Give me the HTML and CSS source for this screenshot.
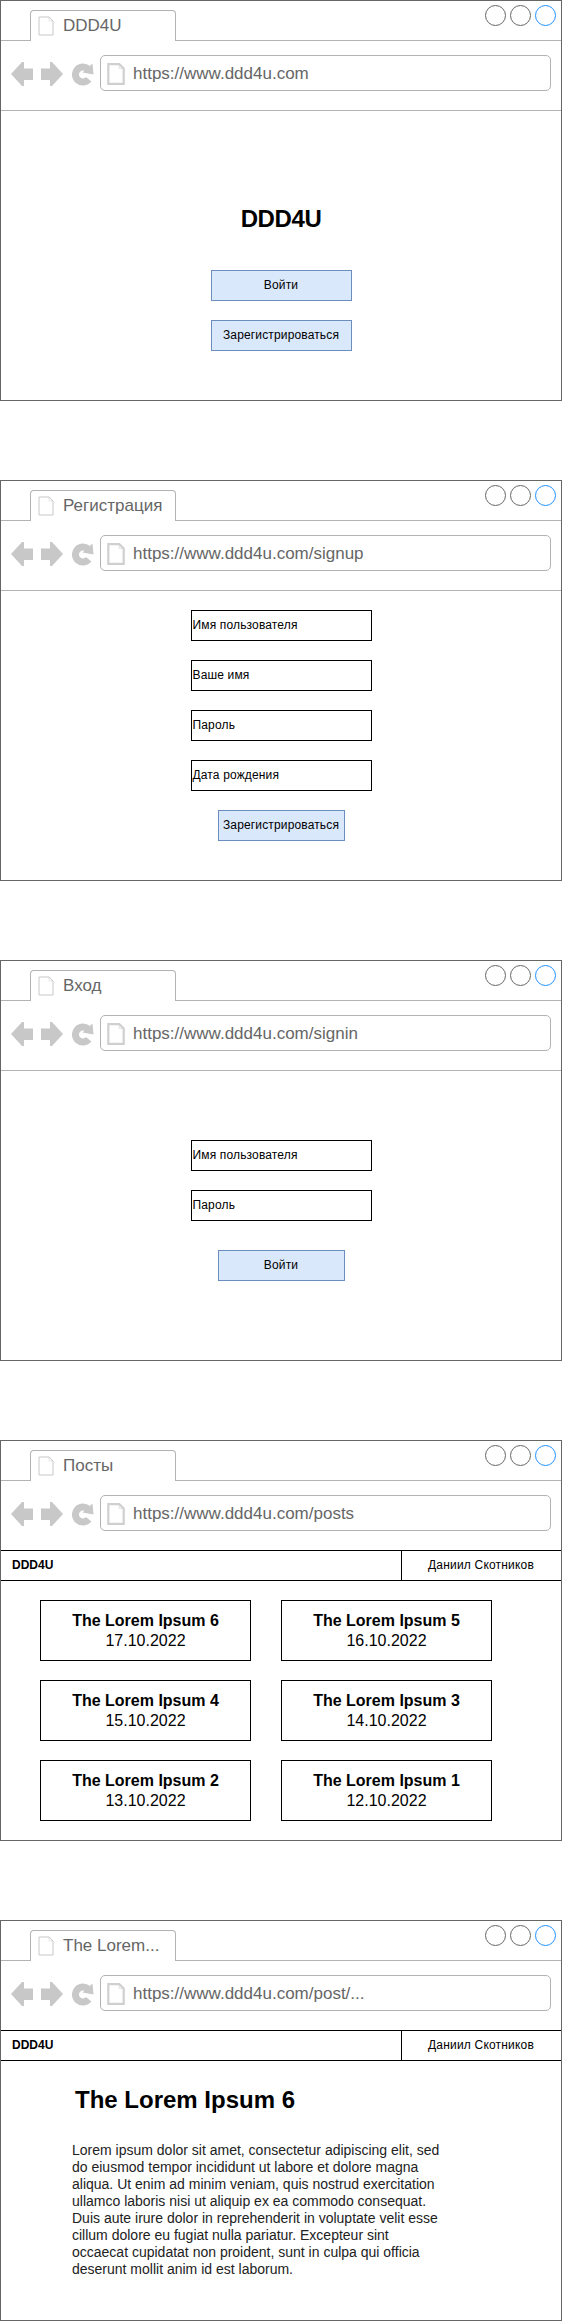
FILE: index.html
```html
<!DOCTYPE html>
<html lang="en">
<head>
    <meta charset="UTF-8">
    <meta name="viewport" content="width=device-width, initial-scale=1.0">
    <title>DDD4U mockups</title>

    <link rel="stylesheet" href="styles.css">
</head>
<body>

    <!-- Shared browser chrome icons -->
    <svg class="sprite" width="0" height="0">
        <symbol id="icon-doc" viewBox="0 0 16 20">
            <path d="M1 1H11L15 5V19H1Z" fill="#fff" stroke="currentColor"/>
            <path d="M11 1V5H15" fill="none" stroke="currentColor" stroke-width="0.5"/>
        </symbol>
        <symbol id="icon-back" viewBox="0 0 22 24">
            <path d="M0 12L11 0H13V6.500H22V18H13V24H11Z" fill="currentColor"/>
        </symbol>
        <symbol id="icon-forward" viewBox="0 0 22 24">
            <path d="M22 12L11 0H9V6.500H0V18H9V24H11Z" fill="currentColor"/>
        </symbol>
        <symbol id="icon-reload" viewBox="0 0 22 24">
            <path d="M15.800 6.750A7.500 7.500 0 1 0 16.700 17.300" fill="none" stroke="currentColor" stroke-width="7"/>
            <path d="M10.500 10.500L20.500 1.500L21.500 12.500Z" fill="currentColor"/>
        </symbol>
    </svg>

    <div class="page">

        <section class="window">
            <div class="tabbar">
                <div class="tab"><svg class="tab-doc"><use href="#icon-doc"/></svg><span>DDD4U</span></div>
                <div class="controls"><i class="dot"></i><i class="dot"></i><i class="dot dot-active"></i></div>
            </div>
            <div class="toolbar">
                <svg class="nav-icon"><use href="#icon-back"/></svg>
                <svg class="nav-icon"><use href="#icon-forward"/></svg>
                <svg class="nav-icon nav-reload"><use href="#icon-reload"/></svg>
                <div class="urlbar"><svg class="url-doc"><use href="#icon-doc"/></svg><span>https://www.ddd4u.com</span></div>
            </div>
            <div class="landing">
                <h1 class="logo">DDD4U</h1>
                <a class="btn btn-wide">Войти</a>
                <a class="btn btn-wide">Зарегистрироваться</a>
            </div>
        </section>

        <section class="window">
            <div class="tabbar">
                <div class="tab"><svg class="tab-doc"><use href="#icon-doc"/></svg><span>Регистрация</span></div>
                <div class="controls"><i class="dot"></i><i class="dot"></i><i class="dot dot-active"></i></div>
            </div>
            <div class="toolbar">
                <svg class="nav-icon"><use href="#icon-back"/></svg>
                <svg class="nav-icon"><use href="#icon-forward"/></svg>
                <svg class="nav-icon nav-reload"><use href="#icon-reload"/></svg>
                <div class="urlbar"><svg class="url-doc"><use href="#icon-doc"/></svg><span>https://www.ddd4u.com/signup</span></div>
            </div>
            <form class="form form-signup">
                <div class="field">Имя пользователя</div>
                <div class="field">Ваше имя</div>
                <div class="field">Пароль</div>
                <div class="field">Дата рождения</div>
                <a class="btn">Зарегистрироваться</a>
            </form>
        </section>

        <section class="window">
            <div class="tabbar">
                <div class="tab"><svg class="tab-doc"><use href="#icon-doc"/></svg><span>Вход</span></div>
                <div class="controls"><i class="dot"></i><i class="dot"></i><i class="dot dot-active"></i></div>
            </div>
            <div class="toolbar">
                <svg class="nav-icon"><use href="#icon-back"/></svg>
                <svg class="nav-icon"><use href="#icon-forward"/></svg>
                <svg class="nav-icon nav-reload"><use href="#icon-reload"/></svg>
                <div class="urlbar"><svg class="url-doc"><use href="#icon-doc"/></svg><span>https://www.ddd4u.com/signin</span></div>
            </div>
            <form class="form form-signin">
                <div class="field">Имя пользователя</div>
                <div class="field">Пароль</div>
                <a class="btn btn-submit">Войти</a>
            </form>
        </section>

        <section class="window window-app">
            <div class="tabbar">
                <div class="tab"><svg class="tab-doc"><use href="#icon-doc"/></svg><span>Посты</span></div>
                <div class="controls"><i class="dot"></i><i class="dot"></i><i class="dot dot-active"></i></div>
            </div>
            <div class="toolbar">
                <svg class="nav-icon"><use href="#icon-back"/></svg>
                <svg class="nav-icon"><use href="#icon-forward"/></svg>
                <svg class="nav-icon nav-reload"><use href="#icon-reload"/></svg>
                <div class="urlbar"><svg class="url-doc"><use href="#icon-doc"/></svg><span>https://www.ddd4u.com/posts</span></div>
            </div>
            <nav class="appnav">
                <div class="brand">DDD4U</div>
                <div class="user">Даниил Скотников</div>
            </nav>
            <div class="posts">
                <a class="card"><b>The Lorem Ipsum 6</b><span>17.10.2022</span></a>
                <a class="card"><b>The Lorem Ipsum 5</b><span>16.10.2022</span></a>
                <a class="card"><b>The Lorem Ipsum 4</b><span>15.10.2022</span></a>
                <a class="card"><b>The Lorem Ipsum 3</b><span>14.10.2022</span></a>
                <a class="card"><b>The Lorem Ipsum 2</b><span>13.10.2022</span></a>
                <a class="card"><b>The Lorem Ipsum 1</b><span>12.10.2022</span></a>
            </div>
        </section>

        <section class="window window-app">
            <div class="tabbar">
                <div class="tab"><svg class="tab-doc"><use href="#icon-doc"/></svg><span>The Lorem...</span></div>
                <div class="controls"><i class="dot"></i><i class="dot"></i><i class="dot dot-active"></i></div>
            </div>
            <div class="toolbar">
                <svg class="nav-icon"><use href="#icon-back"/></svg>
                <svg class="nav-icon"><use href="#icon-forward"/></svg>
                <svg class="nav-icon nav-reload"><use href="#icon-reload"/></svg>
                <div class="urlbar"><svg class="url-doc"><use href="#icon-doc"/></svg><span>https://www.ddd4u.com/post/...</span></div>
            </div>
            <nav class="appnav">
                <div class="brand">DDD4U</div>
                <div class="user">Даниил Скотников</div>
            </nav>
            <article class="post">
                <h1 class="post-title">The Lorem Ipsum 6</h1>
                <p class="post-body">Lorem ipsum dolor sit amet, consectetur adipiscing elit, sed do eiusmod tempor incididunt ut labore et dolore magna aliqua. Ut enim ad minim veniam, quis nostrud exercitation ullamco laboris nisi ut aliquip ex ea commodo consequat. Duis aute irure dolor in reprehenderit in voluptate velit esse cillum dolore eu fugiat nulla pariatur. Excepteur sint occaecat cupidatat non proident, sunt in culpa qui officia deserunt mollit anim id est laborum.</p>
            </article>
        </section>

    </div>
</body>
</html>
```

FILE: styles.css
```css
body {
    margin: 0;
    background-color: #fff;
    color: #000;
    font-family: "Liberation Sans", Arial, sans-serif;
    font-size: 12px;
}
.sprite {
    display: block;
}
.page {
    display: flex;
    flex-direction: column;
    gap: 79px;
}

/* Browser frame */
.window {
    box-sizing: border-box;
    height: 401px;
    border: 1px solid #666;
}
.tabbar {
    box-sizing: border-box;
    display: flex;
    justify-content: space-between;
    height: 40px;
    padding: 9px 5px 0 29px;
    border-bottom: 1px solid #b3b3b3;
}
.tab {
    box-sizing: border-box;
    display: flex;
    align-items: center;
    gap: 9px;
    width: 146px;
    height: 31px;
    padding-left: 7px;
    background-color: #fff;
    border: 1px solid #b3b3b3;
    border-bottom: none;
    border-radius: 4px 4px 0 0;
    color: #666;
    font-size: 17px;
}
.tab-doc {
    width: 16px;
    height: 20px;
    color: #c8c8c8;
}
.controls {
    display: flex;
    gap: 4px;
    margin-top: -5px;
}
.dot {
    box-sizing: border-box;
    width: 21px;
    height: 21px;
    border: 1px solid #666;
    border-radius: 50%;
}
.dot-active {
    border-color: #1e90ff;
}
.toolbar {
    box-sizing: border-box;
    display: flex;
    align-items: flex-start;
    height: 70px;
    padding: 14px 10px 0;
    border-bottom: 1px solid #b3b3b3;
    color: #c8c8c8;
}
.nav-icon {
    width: 22px;
    height: 24px;
    margin: 7px 8px 0 0;
}
.nav-reload {
    margin: 7px 6px 0 1px;
}
.urlbar {
    box-sizing: border-box;
    display: flex;
    flex: 1;
    align-items: center;
    gap: 8px;
    height: 36px;
    padding: 2px 0 0 6px;
    border: 1px solid #b3b3b3;
    border-radius: 5px;
    color: #666;
    font-size: 17px;
}
.url-doc {
    width: 18px;
    height: 22px;
    stroke-width: 2;
    color: #d0d0d0;
}

/* Buttons and forms */
.btn {
    box-sizing: border-box;
    display: flex;
    align-items: center;
    justify-content: center;
    width: 127px;
    height: 31px;
    padding-bottom: 1px;
    background-color: #dae8fc;
    border: 1px solid #6c8ebf;
    letter-spacing: 0.15px;
}
.btn-wide {
    width: 141px;
}
.btn-submit {
    margin-top: 10px;
}
.landing,
.form {
    display: flex;
    flex-direction: column;
    align-items: center;
    gap: 19px;
}
.landing {
    padding-top: 90px;
}
.logo {
    margin: 0 0 14px;
    font-size: 24px;
    line-height: 36px;
    letter-spacing: -0.4px;
}
.form-signup {
    padding-top: 19px;
}
.form-signin {
    padding-top: 69px;
}
.field {
    box-sizing: border-box;
    display: flex;
    align-items: center;
    width: 181px;
    height: 31px;
    padding: 0 0 1px 1px;
    border: 1px solid #000;
    letter-spacing: 0.15px;
}

/* Logged in header */
.window-app .toolbar {
    border-bottom-color: #000;
}
.appnav {
    box-sizing: border-box;
    display: flex;
    height: 30px;
    border-bottom: 1px solid #000;
}
.brand {
    flex: 1;
    padding-left: 11px;
    font-weight: bold;
    line-height: 28px;
}
.user {
    width: 158px;
    padding-right: 1px;
    border-left: 1px solid #000;
    line-height: 28px;
    text-align: center;
    letter-spacing: 0.2px;
}

/* Posts list */
.posts {
    display: grid;
    grid-template-columns: 211px 211px;
    grid-auto-rows: 61px;
    gap: 19px 30px;
    padding: 19px 0 0 39px;
}
.card {
    display: flex;
    flex-direction: column;
    align-items: center;
    justify-content: center;
    border: 1px solid #000;
    font-size: 16px;
    line-height: 20px;
}

/* Single post */
.post {
    padding: 21px 0 0 71px;
}
.post-title {
    margin: 0 0 24px 3px;
    font-size: 24px;
    line-height: 36px;
}
.post-body {
    width: 372px;
    margin: 0;
    color: #222;
    font-size: 14px;
    line-height: 17px;
}
```
